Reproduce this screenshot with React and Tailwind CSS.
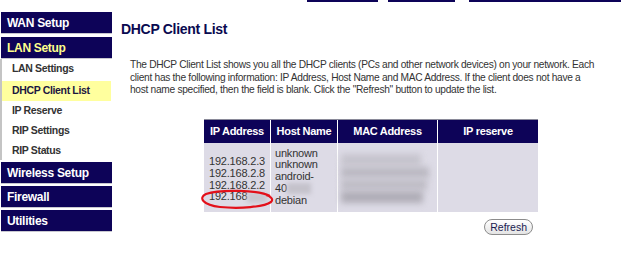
import React from "react";

const NAVY = "bg-[#0d0358]";

function MenuBox({ label, active }) {
    return (
        <div className={`h-[22px] w-[111px] ${NAVY} border-b border-[#c8c8d0] flex items-center pl-[6px] text-[12px] font-bold tracking-[-0.3px] ${active ? "text-[#ffff8c]" : "text-white"}`}>
            {label}
        </div>
    );
}

function SubItem({ label, active }) {
    return (
        <div className={`h-[20px] flex items-center pl-[10px] text-[10.5px] font-bold tracking-[-0.35px] ${active ? "bg-[#ffff9e] text-[#1b1640]" : "text-[#333]"}`}>
            {label}
        </div>
    );
}

export default function App() {
    return (
        <div className="w-[640px] h-[261px] bg-white flex overflow-hidden" style={{ fontFamily: '"Liberation Sans", Arial, sans-serif' }}>
            {/* left menu */}
            <div className="w-[113px] pt-[12px] pl-[1px] flex flex-col">
                <MenuBox label="WAN Setup" />
                <div className="h-[3px]" />
                <MenuBox label="LAN Setup" active />
                <div className="border-l-2 border-[#c4c4c4] w-[111px] -ml-[1px] h-[101px]">
                    <SubItem label="LAN Settings" />
                    <div className="h-[2px]" />
                    <SubItem label="DHCP Client List" active />
                    <SubItem label="IP Reserve" />
                    <SubItem label="RIP Settings" />
                    <SubItem label="RIP Status" />
                </div>
                <div className="h-[2px]" />
                <MenuBox label="Wireless Setup" />
                <div className="h-[2px]" />
                <MenuBox label="Firewall" />
                <div className="h-[2px]" />
                <MenuBox label="Utilities" />
            </div>

            {/* content */}
            <div className="flex-1 flex flex-col">
                <div className="flex h-[2px]">
                    <div className="ml-[194px] w-[71px] bg-[#0d0358]" />
                    <div className="ml-[10px] w-[67px] bg-[#0d0358]" />
                    <div className="ml-[14px] w-[152px] bg-[#0d0358]" />
                </div>
                <h1 className="ml-[8px] mt-[19px] text-[14px] leading-[16px] font-bold tracking-[-0.3px] text-[#0a0a50]">DHCP Client List</h1>
                <p className="ml-[17px] mt-[22px] text-[10.2px] leading-[12.5px] tracking-[-0.3px] text-[#333] whitespace-nowrap">
                    The DHCP Client List shows you all the DHCP clients (PCs and other network devices) on your network. Each<br />
                    client has the following information: IP Address, Host Name and MAC Address. If the client does not have a<br />
                    host name specified, then the field is blank. Click the "Refresh" button to update the list.
                </p>

                <div className="ml-[91px] mt-[22px] w-[334px] relative">
                    <div className="border-t border-[#8a8a99] flex h-[24px] bg-[#0d0358] text-white text-[11px] font-bold tracking-[-0.3px]">
                        <div className="w-[67px] flex items-center justify-center border-r border-white">IP Address</div>
                        <div className="w-[67px] flex items-center justify-center border-r border-white">Host Name</div>
                        <div className="w-[100px] flex items-center justify-center border-r border-white">MAC Address</div>
                        <div className="flex-1 flex items-center justify-center">IP reserve</div>
                    </div>
                    <div className="flex h-[69px] bg-[#dddbe6] text-[11px] leading-[11.7px] text-[#333]">
                        <div className="w-[67px] border-r border-white flex flex-col justify-center pl-[5px] pt-[5px] tracking-[-0.2px]">
                            <span>192.168.2.3</span>
                            <span>192.168.2.8</span>
                            <span>192.168.2.2</span>
                            <span className="flex items-center">192.168<span className="inline-block w-[20px] h-[11px] bg-[#c9c7d0] blur-[2px]" /></span>
                        </div>
                        <div className="w-[67px] border-r border-white flex flex-col justify-center pl-[4px] tracking-[-0.2px]">
                            <span>unknown</span>
                            <span>unknown</span>
                            <span>android-</span>
                            <span className="flex items-center">40<span className="inline-block w-[24px] h-[11px] bg-[#c4c2cb] blur-[2px]" /></span>
                            <span>debian</span>
                        </div>
                        <div className="w-[100px] border-r border-white flex flex-col justify-center gap-[1px] pl-[3px] pt-[2px]">
                            <span className="w-[80px] h-[12px] bg-[#c6c4cd] blur-[3px]" />
                            <span className="w-[88px] h-[11px] bg-[#bbb9c2] blur-[3px]" />
                            <span className="w-[86px] h-[11px] bg-[#bfbdc6] blur-[3px]" />
                            <span className="w-[82px] h-[12px] bg-[#b0aeb7] blur-[3px]" />
                        </div>
                        <div className="flex-1" />
                    </div>

                    {/* red hand-drawn circle annotation */}
                    <svg className="absolute left-[-4px] top-[70px]" width="74" height="20" viewBox="0 0 74 20">
                        <path d="M70 7 C60 1 20 0 6 5 C-2 9 3 16 20 18 C40 20 64 18 71 13 C74 10 70 7 66 6" fill="none" stroke="#e3101a" strokeWidth="2.2" />
                    </svg>

                    <div className="flex justify-end mt-[7px] pr-[5px]">
                        <button className="h-[16px] px-[5px] rounded-full border border-[#8c8c8c] bg-gradient-to-b from-white to-[#e4e4e4] text-[10.5px] leading-[14px] text-[#1a1a50]">
                            Refresh
                        </button>
                    </div>
                </div>
            </div>
        </div>
    );
}
